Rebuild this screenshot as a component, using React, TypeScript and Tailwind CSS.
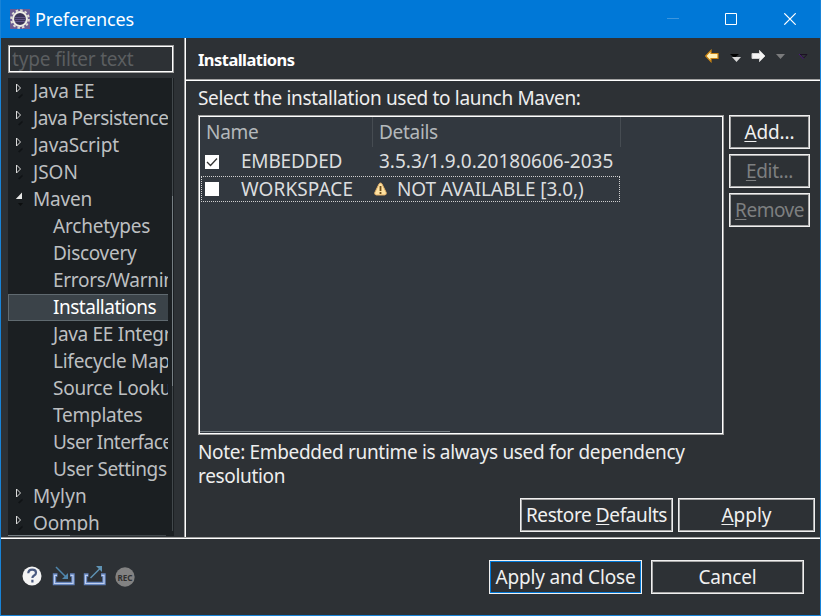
import type { ReactNode } from "react";

type TreeItem = { label: string; level: 0 | 1; state?: "open" | "closed"; tracking?: string };

const items: TreeItem[] = [
  { label: "Java EE", level: 0, state: "closed", tracking: "tracking-[-0.1px]" },
  { label: "Java Persistence", level: 0, state: "closed", tracking: "tracking-[-0.5px]" },
  { label: "JavaScript", level: 0, state: "closed", tracking: "tracking-[-0.1px]" },
  { label: "JSON", level: 0, state: "closed" },
  { label: "Maven", level: 0, state: "open", tracking: "tracking-[-0.2px]" },
  { label: "Archetypes", level: 1, tracking: "tracking-[-0.2px]" },
  { label: "Discovery", level: 1, tracking: "tracking-[-0.3px]" },
  { label: "Errors/Warnings", level: 1, tracking: "tracking-[-0.3px]" },
  { label: "Installations", level: 1, tracking: "tracking-[-0.48px]" },
  { label: "Java EE Integration", level: 1, tracking: "tracking-[-0.3px]" },
  { label: "Lifecycle Mappings", level: 1, tracking: "tracking-[-0.25px]" },
  { label: "Source Lookup", level: 1, tracking: "tracking-[-0.2px]" },
  { label: "Templates", level: 1, tracking: "tracking-[-0.25px]" },
  { label: "User Interface", level: 1, tracking: "tracking-[-0.55px]" },
  { label: "User Settings", level: 1, tracking: "tracking-[-0.4px]" },
  { label: "Mylyn", level: 0, state: "closed", tracking: "tracking-[0.1px]" },
  { label: "Oomph", level: 0, state: "closed", tracking: "tracking-[-0.2px]" },
];

function Twisty({ state }: { state?: "open" | "closed" }) {
  if (state === "closed")
    return (
      <svg width="10" height="18" viewBox="0 0 10 18" className="ml-[7px] shrink-0">
        <path d="M1.500 1v8l4-4z" fill="none" stroke="#dcdcdc" />
        <path d="M3 14.500l4.500-4v2l-3 3z" fill="#101315" />
      </svg>
    );
  return (
    <svg width="10" height="18" viewBox="0 0 10 18" className="ml-[7px] shrink-0">
      <path d="M7 1.500v6.500H.8z" fill="#e6e6e6" />
      <path d="M3 12h5l-2.500 3z" fill="#0c0e0f" />
    </svg>
  );
}

function Button({ children, className = "", disabled, primary }: { children: ReactNode; className?: string; disabled?: boolean; primary?: boolean }) {
  return (
    <button className={`h-[34px] border border-[#f0f0f0] ${className}`}>
      <span className={`flex h-full items-center justify-center border whitespace-nowrap leading-none ${primary ? "border-[#0078d7]" : "border-[#a9a9a9]"} ${disabled ? "text-[#7d7f80]" : "text-[#f0f0f0]"}`}>
        <span>{children}</span>
      </span>
    </button>
  );
}

function U({ children }: { children: string }) {
  return <span className="underline decoration-1 underline-offset-2">{children}</span>;
}

export default function App() {
  return (
    <div className="flex h-[616px] w-[821px] flex-col overflow-hidden border border-t-0 border-[#1883d7] bg-[#2d3135] font-['Noto_Sans',sans-serif] text-[19px] text-[#eeeeee]">
      <header className="flex h-[38px] shrink-0 items-center bg-[#0078d7] pl-[9px] text-white">
        <svg width="20" height="20" viewBox="0 0 20 20">
          <rect width="20" height="20" fill="#6a5c92" />
          <circle cx="10" cy="10" r="8.800" fill="none" stroke="#dcdcd4" strokeWidth="2" strokeDasharray="2.500 2.100" />
          <circle cx="10" cy="10" r="6.900" fill="#3a3458" stroke="#efeee6" strokeWidth="2" />
          <path d="M5 8.500h10M4.500 10.500h11M5 12.500h10" stroke="#5f5588" />
        </svg>
        <span className="ml-[5px] text-[18px] leading-[38px] tracking-[-0.1px]">Preferences</span>
        <svg width="129" height="12" viewBox="0 0 129 12" className="mr-[24px] ml-auto" fill="none">
          <path d="M0 5.500h12" stroke="#3d96de" />
          <path d="M58.500 .5h11v11h-11z" stroke="white" />
          <path d="M117.300 0.300l11.400 11.400m0-11.400l-11.400 11.400" stroke="white" strokeWidth="1.200" />
        </svg>
      </header>

      <div className="flex h-[499px] shrink-0">
        <aside className="flex w-[183px] flex-col pt-[7px] pl-[7px]">
          <div className="h-[28px] w-[166px] border border-[#a0a0a0]">
            <div className="h-full border border-white pl-[2px] leading-[25px] tracking-[-0.2px] text-[#5b5e60]">type filter text</div>
          </div>
          <div className="mt-[5px] flex h-[458px] w-[166px] flex-col bg-[#1b1f22]">
            <div className="flex h-[453px]">
              <ul className="w-[160px] overflow-hidden">
                {items.map((item) => (
                  <li
                    key={item.label}
                    className={`flex h-[27px] items-center whitespace-nowrap leading-[27px] ${item.label === "Installations" ? "border border-r-0 border-[#606a70] bg-[#3b4349] pl-[44px] text-white" : item.level === 1 ? "pl-[45px] text-[#bdbfc1]" : "text-[#bdbfc1]"}`}
                  >
                    {item.level === 0 && (
                      <span className="flex w-[25px] shrink-0">
                        <Twisty state={item.state} />
                      </span>
                    )}
                    <span className={item.tracking}>{item.label}</span>
                  </li>
                ))}
              </ul>
              <div className="ml-[4px] flex w-px flex-col">
                <div className="h-[118px] bg-[#42484c]" />
                <div className="h-[190px] bg-[#767e83]" />
                <div className="flex-1 bg-[#42484c]" />
              </div>
            </div>
            <div className="mt-[4px] flex h-px">
              <div className="w-[62px] bg-[#767e83]" />
              <div className="w-[96px] bg-[#42484c]" />
            </div>
          </div>
        </aside>
        <div className="w-px bg-[#a0a0a0]" />
        <div className="w-px bg-white" />

        <main className="flex flex-1 flex-col">
          <div className="flex h-[41px] shrink-0 items-start justify-between pl-[12px]">
            <h1 className="text-[16.500px] leading-[43px] font-bold tracking-[-0.55px] text-white">Installations</h1>
            <svg width="104" height="14" viewBox="0 0 104 14" className="mt-[11px] mr-[11px]">
              <path d="M.7 7L6 1.400V4.500h7v5H6v3.100z" fill="#fff0b8" stroke="#c98211" strokeWidth="1.200" />
              <path d="M25 5h9l-4.500 4z" fill="#000" />
              <path d="M27 8h9l-4.500 5z" fill="#d8d8d8" />
              <path d="M60 7L54.500 1.400V4.500h-7.500v5h7.500v3.100z" fill="#f4f4f4" stroke="#d0d0d0" />
              <path d="M71 5h9l-4.500 5z" fill="#7a7b7c" />
              <path d="M95 5.500h7l-3.500 3.800z" fill="none" stroke="#1c1024" />
              <path d="M94 5l4.500 5" stroke="#4b187c" />
            </svg>
          </div>
          <div className="h-px shrink-0 bg-[#a0a0a0]" />
          <div className="h-px shrink-0 bg-white" />
          <div className="pl-[12px]">
            <p className="h-[34px] leading-[35px] tracking-[-0.32px]">Select the installation used to launch Maven:</p>
            <div className="flex gap-[5px]">
              <div className="h-[320px] w-[526px] border border-[#a0a0a0]">
                <div className="flex h-full flex-col border border-white bg-[#32383f]">
                  <div className="flex h-[30px] leading-[30px] text-[#b4b8bb]">
                    <div className="w-[173px] border-r border-[#464c52] pl-[6px] tracking-[-0.3px]">Name</div>
                    <div className="w-[248px] border-r border-[#464c52] pl-[6px] tracking-[-0.3px]">Details</div>
                  </div>
                  <div className="flex h-[29px] items-center pl-[5px] leading-[29px] text-[#dcdedf]">
                    <svg width="14" height="14" viewBox="0 0 14 14">
                      <rect width="14" height="14" fill="white" />
                      <path d="M2 7l3.500 3.500L12 3.500" fill="none" stroke="#333" strokeWidth="1.300" />
                    </svg>
                    <span className="ml-[22px] w-[138px] tracking-[-0.2px]">EMBEDDED</span>
                    <span>3.5.3/1.9.0.20180606-2035</span>
                  </div>
                  <div className="ml-px flex h-[26px] w-[419px] items-center border border-dotted border-[#d0d0d0] pl-[3px] leading-[24px] text-[#dcdedf]">
                    <div className="h-[14px] w-[14px] bg-white" />
                    <span className="ml-[22px] w-[133px] tracking-[0.1px]">WORKSPACE</span>
                    <svg width="13" height="14" viewBox="0 0 13 14">
                      <path d="M6.500 1q1 0 1.500 1l4.200 8.500q.6 2.300-1.500 2.500H2.300Q.2 12.800.8 10.500L5 2q.5-1 1.500-1z" fill="#ffe2a0" stroke="#e0ae68" />
                      <path d="M6.500 4v5M6.500 10v2" stroke="#6e4c18" strokeWidth="1.800" />
                    </svg>
                    <span className="ml-[10px] tracking-[-0.1px]">NOT AVAILABLE [3.0,)</span>
                  </div>
                  <div className="mt-auto h-px w-[250px] bg-[#767e83]" />
                  <div className="h-px" />
                </div>
              </div>
              <div className="flex flex-col gap-[5px]">
                <Button className="w-[81px] tracking-[-0.1px]"><U>A</U>dd...</Button>
                <Button className="w-[81px] tracking-[-0.3px]" disabled><U>E</U>dit...</Button>
                <Button className="w-[81px] tracking-[-0.5px]" disabled><U>R</U>emove</Button>
              </div>
            </div>
            <p className="mt-[5px] h-[58px] leading-[24px] tracking-[-0.33px]">Note: Embedded runtime is always used for dependency<br />resolution</p>
            <div className="flex justify-end gap-[5px] pr-[5px]">
              <Button className="w-[153px] tracking-[-0.4px]">Restore <U>D</U>efaults</Button>
              <Button className="w-[137px]"><U>A</U>pply</Button>
            </div>
          </div>
        </main>
      </div>

      <div className="h-px shrink-0 bg-[#a0a0a0]" />
      <div className="h-px shrink-0 bg-white" />
      <footer className="flex flex-1 items-start pt-[21px] pl-[21px]">
        <svg width="114" height="22" viewBox="0 0 114 22" className="mt-[5px]">
          <circle cx="10" cy="11" r="9.500" fill="#f4f4f4" />
          <path d="M6.300 8.300q0-3.700 3.900-3.700 3.800 0 3.800 3.100 0 1.700-1.900 2.800-1.700 1-1.700 2.600M10.400 14.800v2.600" fill="none" stroke="#4a5a80" strokeWidth="2.200" />
          <g>
            <path d="M35.500 10h-3v8.500h18.500v-8.500h-3" fill="none" stroke="#6484bd" strokeWidth="3.400" />
            <path d="M35 10.300h-2.500v8.200h18.500v-8.200h-2.500" fill="none" stroke="#c0d0f0" strokeWidth="1.200" />
            <path d="M34 2l10 10" stroke="#4f86ac" strokeWidth="1.500" />
            <path d="M46 14h-6l6-6z" fill="#4f86ac" />
          </g>
          <g>
            <path d="M66.500 10h-3v8.500h18.500v-8.500h-3" fill="none" stroke="#6484bd" strokeWidth="3.400" />
            <path d="M66 10.300h-2.500v8.200h18.500v-8.200h-2.500" fill="none" stroke="#c0d0f0" strokeWidth="1.200" />
            <path d="M68.500 13l9.500-9.500" stroke="#5f93b4" strokeWidth="1.500" />
            <path d="M80 1v6l-6-6z" fill="#5f93b4" />
          </g>
          <circle cx="103" cy="12" r="9.700" fill="#828282" />
          <text x="103" y="15.500" textAnchor="middle" className="fill-[#303030] text-[9.500px] font-bold" textLength="15" lengthAdjust="spacingAndGlyphs">REC</text>
        </svg>
        <div className="ml-auto flex gap-[9px] pr-[16px]">
          <Button className="w-[153px] tracking-[-0.15px]" primary>Apply and Close</Button>
          <Button className="w-[153px] tracking-[-0.2px]">Cancel</Button>
        </div>
      </footer>
    </div>
  );
}
